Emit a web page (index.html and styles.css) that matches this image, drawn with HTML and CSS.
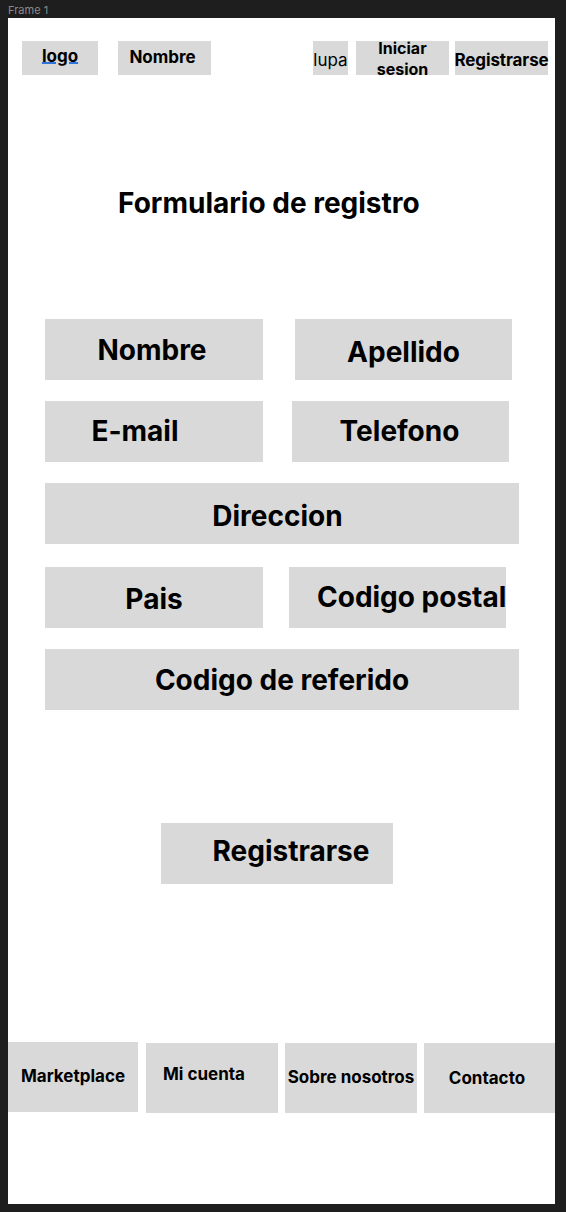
FILE: index.html
```html
<!DOCTYPE html>
<html lang="es">
<head>
<meta charset="utf-8">
<title>Frame 1</title>
<link rel="stylesheet" href="styles.css">
</head>
<body>
<div class="frame-label">Frame 1</div>
<div class="frame">
  <header class="topbar">
    <div class="box logo"><span class="logo-text">logo</span></div>
    <div class="box brand">Nombre</div>
    <div class="box lupa">lupa</div>
    <div class="box login">Iniciar<br>sesion</div>
    <div class="box signup">Registrarse</div>
  </header>

  <h1 class="title">Formulario de registro</h1>

  <form class="form">
    <div class="row">
      <div class="field half f-nombre">Nombre</div>
      <div class="field half f-apellido">Apellido</div>
    </div>
    <div class="row">
      <div class="field half f-email">E-mail</div>
      <div class="field half f-telefono">Telefono</div>
    </div>
    <div class="row">
      <div class="field full f-direccion">Direccion</div>
    </div>
    <div class="row row-wide">
      <div class="field half f-pais">Pais</div>
      <div class="field half f-postal">Codigo postal</div>
    </div>
    <div class="row">
      <div class="field full f-referido">Codigo de referido</div>
    </div>
  </form>

  <div class="submit">Registrarse</div>

  <footer class="footer">
    <div class="fbox f-market">Marketplace</div>
    <div class="fbox f-cuenta">Mi cuenta</div>
    <div class="fbox f-sobre">Sobre nosotros</div>
    <div class="fbox f-contacto">Contacto</div>
  </footer>
</div>
</body>
</html>
```

FILE: styles.css
```css
* { box-sizing: border-box; }

html, body {
  margin: 0;
  padding: 0;
  background: #1e1e1e;
}

body {
  padding: 0 11px 8px 8px;
  font-family: Inter, "Noto Sans", sans-serif;
  color: #000;
}

.frame-label {
  height: 18px;
  font-size: 11px;
  line-height: 20px;
  color: #8a8a8a;
  font-weight: 400;
}

.frame {
  width: 547px;
  height: 1186px;
  background: #fff;
  display: flex;
  flex-direction: column;
  overflow: hidden;
}

/* header */
.topbar {
  display: flex;
  align-items: flex-start;
  margin-top: 23px;
  height: 34px;
}

.box {
  height: 34px;
  background: #d9d9d9;
  display: flex;
  align-items: center;
  justify-content: center;
  font-weight: 700;
  font-size: 17px;
  white-space: nowrap;
}

.logo { margin-left: 14px; width: 76px; padding-bottom: 4px; }
.logo-text {
  text-decoration-line: underline;
  text-decoration-style: solid;
  text-decoration-color: #2f74d8;
  text-decoration-thickness: 2px;
  text-underline-offset: 0px;
}
.brand { margin-left: 20px; width: 93px; padding-bottom: 2px; padding-right: 4px; }
.lupa {
  margin-left: 102px;
  width: 35px;
  font-weight: 400;
  font-size: 17px;
  padding-top: 3px;
  overflow: visible;
}
.login {
  margin-left: 8px;
  width: 93px;
  flex-direction: column;
  text-align: center;
  font-size: 16px;
  line-height: 21px;
  padding-top: 2px;
  overflow: visible;
}
.signup {
  margin-left: 6px;
  width: 93px;
  font-size: 17px;
  padding-top: 3px;
  letter-spacing: -0.1px;
  overflow: visible;
}

/* title */
.title {
  margin: 111px 0 0 110px;
  font-size: 28px;
  line-height: 34px;
  font-weight: 700;
}

/* form */
.form {
  margin: 99px 0 0 37px;
  display: flex;
  flex-direction: column;
  gap: 21px;
}

.row { display: flex; }
.row-wide { margin-top: 2px; }

.field {
  height: 61px;
  background: #d9d9d9;
  display: flex;
  align-items: center;
  justify-content: center;
  font-size: 28px;
  font-weight: 700;
  white-space: nowrap;
}

.half { width: 218px; }
.full { width: 474px; }

.f-nombre { padding-right: 4px; }
.f-apellido { margin-left: 32px; width: 217px; padding-top: 4px; }
.f-email { padding-right: 38px; padding-bottom: 2px; }
.f-telefono { margin-left: 29px; width: 217px; padding-right: 2px; padding-bottom: 2px; }
.f-direccion { padding-right: 9px; padding-top: 4px; }
.f-pais { padding-top: 2px; }
.f-postal { margin-left: 26px; width: 217px; padding-left: 28px; justify-content: flex-start; padding-bottom: 2px; overflow: visible; }
.f-referido { padding-top: 0; }

/* submit */
.submit {
  margin: 113px 0 0 153px;
  width: 232px;
  height: 61px;
  background: #d9d9d9;
  display: flex;
  align-items: center;
  justify-content: center;
  font-size: 28px;
  font-weight: 700;
  padding-left: 28px;
  padding-bottom: 5px;
}

/* footer */
.footer {
  margin-top: 158px;
  display: flex;
  align-items: flex-start;
}

.fbox {
  height: 70px;
  background: #d9d9d9;
  display: flex;
  align-items: center;
  justify-content: center;
  font-size: 17px;
  font-weight: 700;
  white-space: nowrap;
}

.f-market { width: 130px; padding-bottom: 3px; }
.f-cuenta { margin-left: 8px; width: 132px; margin-top: 1px; padding-right: 16px; padding-bottom: 9px; }
.f-sobre { margin-left: 7px; width: 132px; margin-top: 1px; padding-bottom: 3px; }
.f-contacto { margin-left: 7px; width: 131px; margin-top: 1px; padding-right: 5px; }
```
